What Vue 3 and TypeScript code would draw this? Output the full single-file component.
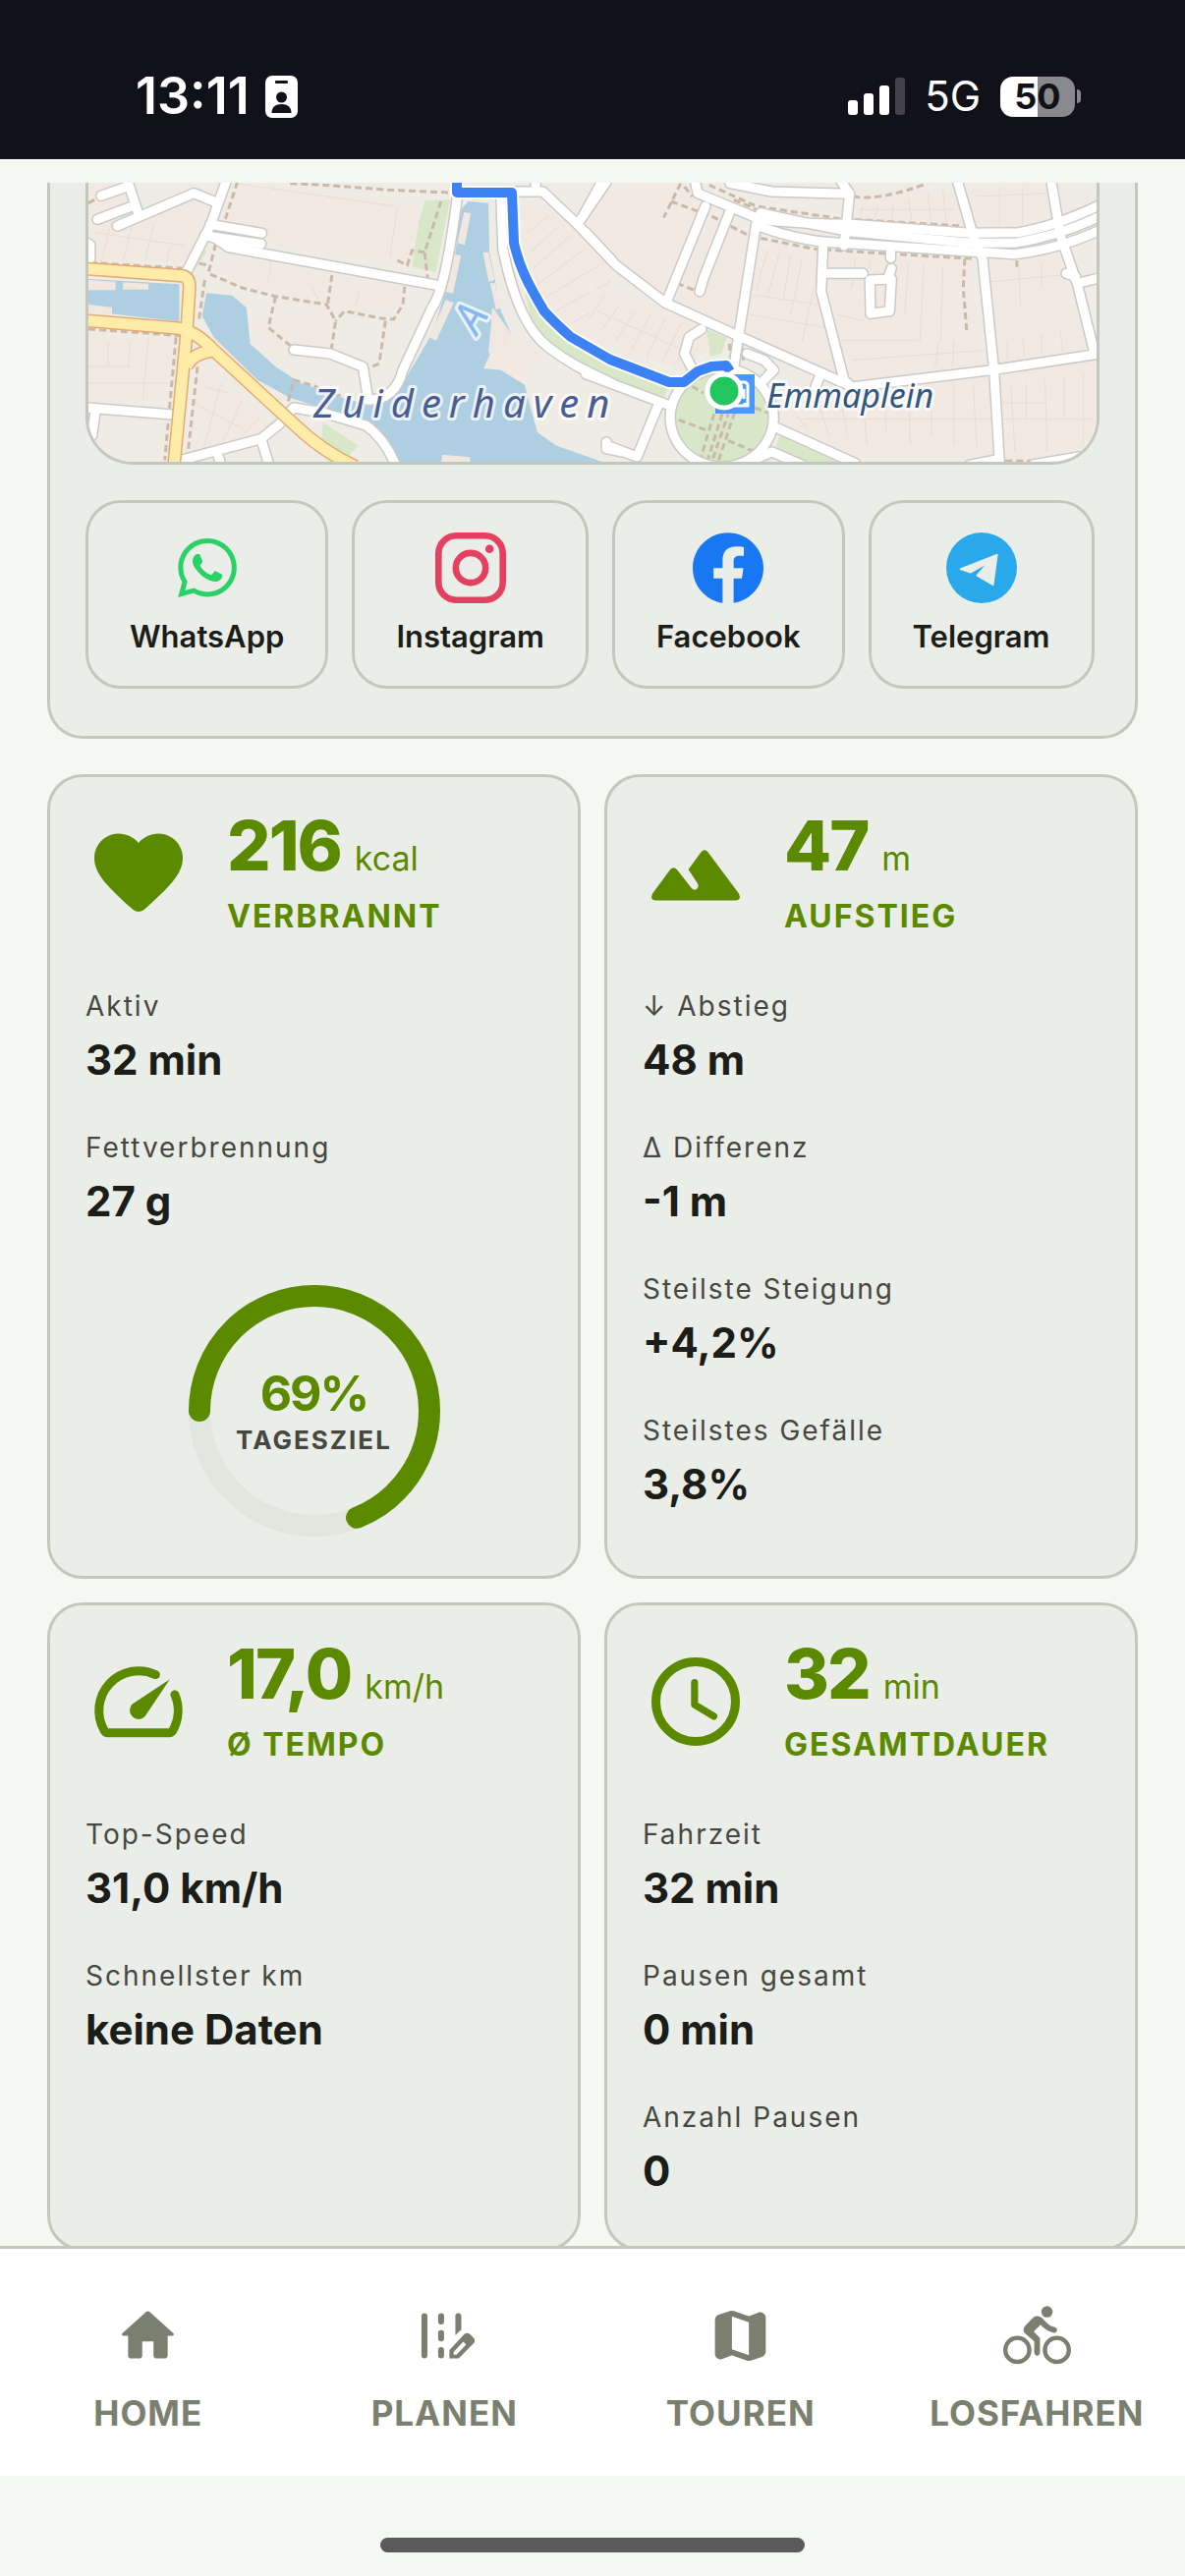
<script setup lang="ts">
interface Stat {
  label: string
  value: string
}

interface StatCard {
  id: 'heart' | 'mountain' | 'speed' | 'clock'
  value: string
  unit: string
  title: string
  stats: Stat[]
  goal?: number
}

interface Tile {
  id: string
  transform: string
  water: string[]
  parks: string[]
  blocks: string[]
  boats: string[]
  roads: string[]
  main: string[]
  paths: string[]
  lots: string[]
}

const shares = [
  { id: 'whatsapp', name: 'WhatsApp' },
  { id: 'instagram', name: 'Instagram' },
  { id: 'facebook', name: 'Facebook' },
  { id: 'telegram', name: 'Telegram' },
]

const cards: StatCard[] = [
  {
    id: 'heart',
    value: '216',
    unit: 'kcal',
    title: 'VERBRANNT',
    stats: [
      { label: 'Aktiv', value: '32 min' },
      { label: 'Fettverbrennung', value: '27 g' },
    ],
    goal: 69,
  },
  {
    id: 'mountain',
    value: '47',
    unit: 'm',
    title: 'AUFSTIEG',
    stats: [
      { label: '↓ Abstieg', value: '48 m' },
      { label: 'Δ Differenz', value: '-1 m' },
      { label: 'Steilste Steigung', value: '+4,2%' },
      { label: 'Steilstes Gefälle', value: '3,8%' },
    ],
  },
  {
    id: 'speed',
    value: '17,0',
    unit: 'km/h',
    title: 'Ø TEMPO',
    stats: [
      { label: 'Top-Speed', value: '31,0 km/h' },
      { label: 'Schnellster km', value: 'keine Daten' },
    ],
  },
  {
    id: 'clock',
    value: '32',
    unit: 'min',
    title: 'GESAMTDAUER',
    stats: [
      { label: 'Fahrzeit', value: '32 min' },
      { label: 'Pausen gesamt', value: '0 min' },
      { label: 'Anzahl Pausen', value: '0' },
    ],
  },
]

const nav = [
  { id: 'home', label: 'HOME' },
  { id: 'plan', label: 'PLANEN' },
  { id: 'tours', label: 'TOUREN' },
  { id: 'ride', label: 'LOSFAHREN' },
]

// Each map tile keeps its own coordinate grid and is placed by its matrix.
const tiles: Tile[] = [
  {
    id: 'west',
    transform: 'matrix(0.37 0 0 0.3333 -50 -26)',
    blocks: [
      'M140 70H240L275 170L400 120L470 140L440 230L400 320L140 315Z',
      'M550 80L700 90L1045 150L1020 335L640 270L500 195Z',
      'M530 305L1000 395L990 460L810 480L650 410L530 380Z',
      'M135 550H370L350 745L135 740Z',
      'M440 640L640 820L600 850L400 910Z',
      'M580 500L790 470L800 580L700 575L640 610Z',
      'M1330 130L1480 215L1570 330V600L1480 540L1390 450L1330 300Z',
      'M1300 540L1380 600L1320 690L1222 640V600L1270 605Z',
    ],
    water: [
      'M130 372L385 388L385 502L130 470Z',
      'M460 415L530 422L570 460L580 570L650 640L720 690L850 740L930 760L900 812L850 790L690 735L600 680L480 550L448 485Z',
      'M1180 135L1235 140L1238 290L1270 470L1298 540L1245 460L1240 600L1222 645L1270 650L1335 695L1350 760L1370 840L1420 880L1560 935H985L960 860L900 820L920 750L1000 690L1080 540L1140 330L1160 160Z',
    ],
    boats: [
      'M1168 168L1187 172L1170 268L1150 262Z',
      'M1140 296L1160 300L1138 416L1116 410Z',
      'M1118 436L1140 444L1092 560L1072 550Z',
      'M1220 290L1236 290L1252 375L1236 380Z',
      'M1240 385L1254 385L1270 460L1256 466Z',
      'M135 375L210 380V406H135Z',
      'M230 382L300 386V404H230Z',
      'M135 450L200 458V480H135Z',
      'M1108 908L1185 916V932H1106Z',
      'M1248 460L1298 540L1270 606L1235 598Z',
    ],
    parks: [
      'M1062 133L1130 130L1090 350L1025 335L1045 190Z',
      'M1335 410L1390 490L1470 560L1570 615V665L1480 625L1390 560L1350 480Z',
      'M780 810L876 880L850 915L775 870Z',
      'M445 265L460 290L430 345Z',
    ],
    lots: [
      'M150 230L400 270M170 320L200 190M230 320L260 190M290 320L315 200M350 320L360 270M1060 150V330M985 155L965 300',
      'M190 560V640M250 560L245 640M300 550L285 740M135 640H250M135 690H360',
      'M450 900L500 690M500 880L560 740M550 860L610 790M440 760L560 830M450 700L520 720M540 80L980 150M750 400L770 440M880 410L870 450M640 300L630 380',
      'M1400 180L1345 230M1430 210L1350 290M1460 240L1360 340M1500 280L1370 390M1540 330L1390 430M1570 380L1420 470M1570 440L1460 510',
    ],
    roads: [
      'M515 70L470 210L405 350',
      'M170 118L235 92M245 80L270 165M160 190L250 152M215 210L425 110L480 135',
      'M470 205L612 232M460 240L610 265M455 238Q480 240 520 275L1090 390',
      'M1150 120C1125 330 1105 420 1080 460L1000 650Q980 740 905 742L890 640L800 600L700 588',
      'M1270 130L1275 280C1300 420 1340 530 1400 580C1470 640 1520 660 1575 690',
      'M1310 105H1385L1480 205L1575 315M1480 205L1560 75M1365 70V105',
      'M130 262L140 268V310',
      'M130 765L375 787M155 770L145 850',
      'M390 925L610 860L660 815L700 765L780 780L900 820Q950 860 980 940M610 860L632 940M490 905L500 940',
      'M1560 870V890L1600 900',
    ],
    main: [
      'M120 340L395 362Q415 370 413 400L405 540L370 945',
      'M120 498L380 522Q430 530 480 590L700 815Q780 900 870 945',
      'M405 640Q420 600 475 592',
    ],
    paths: [
      'M690 80L800 86L960 100L1130 108M545 75L510 195',
      'M485 265L465 355L560 400L650 425L790 450L815 500L803 590M440 325L465 330',
      'M650 425L630 520L690 575M805 360L793 450',
      'M1005 395L1000 450L975 495L940 492L840 470L815 500M952 500L935 630L905 645',
      'M1105 135L1060 290L1068 370M985 315L1012 330L1025 285L1060 290',
      'M140 322L400 340M135 525L390 545M376 550L345 925M435 640L408 910M455 375L438 505',
      'M685 745L700 680L760 700L830 730M135 140L160 125',
    ],
  },
  {
    id: 'east',
    transform: 'matrix(0.3865 0 0 0.3333 510 -26)',
    blocks: [
      'M0 120L120 80H240L290 130L200 430L80 320L0 220Z',
      'M320 190L420 240L380 530L215 435Z',
      'M700 130L960 110L990 215L700 190Z',
      'M450 255L600 290L600 410L660 660L400 530Z',
      'M630 300L780 300L1000 320L1040 640L700 690L620 410Z',
      'M990 90L1200 80L1230 200L1130 225L1015 220Z',
      'M1045 320L1230 290L1310 590L1070 640Z',
      'M500 780L690 710L1050 660L1070 920H700L500 820Z',
      'M1080 660L1340 615V930H1090Z',
      'M0 400L200 460L340 540L250 650L100 600L0 540Z',
    ],
    water: ['M-5 915L50 940H-5Z'],
    boats: [],
    parks: [
      'M-5 610L205 705L195 745L-5 655Z',
      'M500 850L650 930H570L490 890Z',
      'M308 525L360 550L348 600L318 608Z',
      'M348 640A136 155 0 1 0 349 640Z',
    ],
    lots: [
      'M470 280L440 400M500 290L470 420M530 300L510 440M560 310L530 480M590 400L560 560M430 420L600 450M420 480L620 520',
      'M700 310L690 400M740 310L735 340M840 320L830 480M880 330L870 560M930 340L925 560M650 480L720 500M660 560L860 560M690 620L1040 590M920 560L910 640M960 560L955 640',
      'M720 150L710 190M760 150L750 190M800 140L795 190M840 130L850 200M890 110L900 200M930 100L940 205M710 160H960',
      'M1100 560V620M1140 550L1145 610M1190 540V605M1240 530L1245 595M1060 380L1240 360M1130 320L1135 460M1190 320V400',
      'M1110 700L1120 900M1150 690V800M1200 680L1205 900M1250 670V790M1300 660L1300 880M1090 800H1330M1090 750H1200',
      'M530 760L570 830M600 740L630 850M660 730L680 860M720 720L730 880M780 710V840M840 700L845 880M900 700V850M960 690V880M1010 690L1020 890M550 800H1060',
      'M40 420L0 490M80 450L30 530M120 470L70 560M160 480L110 590M200 490L150 610M240 510L190 630M280 540L220 640M20 470L250 590M1020 120L1200 110M1080 90V210M1140 90V205',
    ],
    roads: [
      'M-10 230L70 330L200 445L390 545L690 700',
      'M35 70L-15 175',
      'M275 60L285 110L450 190Q560 205 690 205L1000 232L1130 230Q1230 210 1345 145',
      'M450 170Q560 200 690 228L1000 262L1120 262Q1240 240 1345 180',
      'M450 212Q550 255 640 260L1000 288L1120 296Q1240 280 1345 222',
      'M305 150L205 435M370 165L300 370L290 410M440 195L380 640',
      'M370 80L480 105L680 112M660 70L685 112L670 270',
      'M615 270L610 410L670 680L690 702L1060 650L1345 600',
      'M615 355H720M738 375L795 372L790 470L740 478L738 375M785 372L795 340M793 285V308',
      'M968 70L1010 240L1035 310L1065 650L1080 940',
      'M1215 70L1240 240L1285 390L1330 600M1285 385L1345 368M1255 355L1280 365',
      'M295 525L262 550L250 600L270 645M415 600L460 620L485 650L460 680M610 660L595 700',
      'M-10 662L210 758M180 760L125 915L45 880',
      'M348 645A136 150 0 1 0 349 645M490 825L700 935M430 925L480 900L560 940M1000 940L1065 925M1170 938L1290 915',
    ],
    main: [],
    paths: [
      'M240 80L195 185M215 135L330 185L420 240L590 280L790 295L1010 310',
      'M315 85L440 150L660 188L980 210M250 90L270 120M380 130L440 160',
      'M695 120Q760 135 890 80M230 385L285 410M988 310L984 400L993 530',
      'M290 930L330 775M310 930L350 780M340 925L382 780M325 920L365 785',
      'M235 802L310 835M365 865L435 900M270 700L300 720M435 765L480 785',
      'M368 570L372 620M400 570L405 620M1095 928H1170M1125 315V335M1250 220L1340 165',
    ],
  },
]
</script>

<template>
  <div class="app">
    <header class="status">
      <div class="status-left">
        <span class="time">13:11</span>
        <svg class="badge" viewBox="0 0 33 43" aria-hidden="true">
          <rect width="33" height="43" rx="7" fill="#fff" />
          <rect x="10" y="5" width="13" height="3" rx="1" fill="#11111a" />
          <circle cx="16.500" cy="22" r="5.500" fill="#11111a" />
          <path d="M6.500 38c0-6 4-9 10-9s10 3 10 9z" fill="#11111a" />
        </svg>
      </div>
      <div class="status-right">
        <svg class="signal" viewBox="0 0 58 38" aria-hidden="true">
          <rect x="0" y="23" width="10" height="15" rx="3" fill="#fff" />
          <rect x="16" y="16" width="10" height="22" rx="3" fill="#fff" />
          <rect x="32" y="8" width="10" height="30" rx="3" fill="#fff" />
          <rect x="48" y="0" width="10" height="38" rx="3" fill="#424248" />
        </svg>
        <span class="network">5G</span>
        <div class="battery">
          <span class="battery-body">50</span>
          <span class="battery-nub"></span>
        </div>
      </div>
    </header>

    <main class="content">
      <section class="share-card">
        <div class="map">
          <svg viewBox="0 0 1026 284" preserveAspectRatio="xMidYMax slice" role="img" aria-label="Karte der Tour">
            <rect width="1026" height="284" fill="#efebe5" />
            <g v-for="t in tiles" :key="t.id + '-land'" :transform="t.transform">
              <path v-for="d in t.blocks" :key="d" :d="d" fill="#f2e9e2" />
              <path v-for="d in t.lots" :key="d" :d="d" class="lot" />
              <path v-for="d in t.water" :key="d" :d="d" fill="#aecee1" />
              <path v-for="d in t.boats" :key="d" :d="d" fill="#f0e7e0" />
              <path v-for="d in t.parks" :key="d" :d="d" fill="#d8e7c8" />
            </g>
            <g v-for="t in tiles" :key="t.id + '-case'" :transform="t.transform">
              <path v-for="d in t.paths" :key="d" :d="d" class="footway" />
              <path v-for="d in t.roads" :key="d" :d="d" class="road-case" />
            </g>
            <g v-for="t in tiles" :key="t.id + '-road'" :transform="t.transform">
              <path v-for="d in t.roads" :key="d" :d="d" class="road" />
              <path v-for="d in t.main" :key="d + 'c'" :d="d" class="main-case" />
              <path v-for="d in t.main" :key="d" :d="d" class="main-road" />
            </g>
            <text class="river" text-anchor="middle" transform="translate(402 145) rotate(-60)">A</text>
            <text class="harbour" x="229" y="239">Zuiderhaven</text>
            <rect x="638" y="195" width="40" height="40" fill="#4c97fb" />
            <path d="M655 203h12q4 0 4 4v20h-16M667 210v10M668 224v4" fill="none" stroke="#fff" stroke-width="3" />
            <path class="route-halo" d="M375-4V10H431L433 61C438 84 446 101 464 131Q478 146 491 157L531 180L591 203H606L620 192L634 187L649 186L653 192" />
            <path class="route" d="M375-4V10H431L433 61C438 84 446 101 464 131Q478 146 491 157L531 180L591 203H606L620 192L634 187L649 186L653 192" />
            <circle cx="647" cy="212" r="17" fill="#22c55e" stroke="#fff" stroke-width="5" />
            <text class="place" x="690" y="229">Emmaplein</text>
          </svg>
        </div>

        <div class="shares">
          <button v-for="s in shares" :key="s.id" type="button" class="share">
            <svg viewBox="0 0 24 24" aria-hidden="true">
              <template v-if="s.id === 'whatsapp'">
                <path fill="#29d167" d="M12.04 2C6.58 2 2.13 6.450 2.130 11.910C2.130 13.660 2.590 15.360 3.450 16.860L2.050 22L7.300 20.620C8.750 21.410 10.380 21.830 12.040 21.830C17.500 21.830 21.950 17.380 21.950 11.920C21.950 9.270 20.920 6.780 19.050 4.910C17.180 3.030 14.690 2 12.040 2M12.050 3.670C14.250 3.670 16.310 4.530 17.870 6.090C19.420 7.650 20.280 9.720 20.280 11.920C20.280 16.460 16.580 20.150 12.040 20.150C10.560 20.150 9.110 19.760 7.850 19L7.550 18.830L4.430 19.650L5.260 16.610L5.060 16.290C4.240 15 3.800 13.470 3.800 11.910C3.810 7.370 7.500 3.670 12.050 3.670" />
                <path fill="#29d167" d="M8.530 7.330C8.370 7.330 8.100 7.390 7.870 7.640C7.650 7.890 7 8.500 7 9.710C7 10.930 7.890 12.100 8 12.270C8.140 12.440 9.760 14.940 12.250 16C12.840 16.270 13.300 16.420 13.660 16.530C14.250 16.720 14.790 16.690 15.220 16.630C15.700 16.560 16.680 16.030 16.890 15.450C17.100 14.870 17.100 14.380 17.040 14.270C16.970 14.170 16.810 14.110 16.560 14C16.310 13.860 15.090 13.260 14.870 13.180C14.640 13.100 14.500 13.060 14.310 13.300C14.150 13.550 13.670 14.110 13.530 14.270C13.380 14.440 13.240 14.460 13 14.340C12.740 14.210 11.940 13.950 11 13.110C10.260 12.450 9.770 11.640 9.620 11.390C9.500 11.150 9.610 11 9.730 10.890C9.840 10.780 10 10.600 10.100 10.450C10.230 10.310 10.270 10.200 10.350 10.040C10.430 9.870 10.390 9.730 10.330 9.610C10.270 9.500 9.770 8.260 9.560 7.770C9.360 7.290 9.160 7.350 9 7.340Z" />
              </template>
              <g v-else-if="s.id === 'instagram'" fill="none" stroke="#e4405f" stroke-width="2.2">
                <rect x="1.100" y="1.100" width="21.800" height="21.800" rx="6" />
                <circle cx="12" cy="12" r="5.050" />
                <circle cx="18.400" cy="5.600" r="1.440" fill="#e4405f" stroke="none" />
              </g>
              <path v-else-if="s.id === 'facebook'" fill="#1877f2" d="M24 12.073c0-6.627-5.373-12-12-12s-12 5.373-12 12c0 5.990 4.388 10.954 10.125 11.854v-8.385H7.078v-3.470h3.047V9.430c0-3.007 1.792-4.669 4.533-4.669 1.312 0 2.686.235 2.686.235v2.953H15.830c-1.491 0-1.956.925-1.956 1.874v2.250h3.328l-.532 3.470h-2.796v8.385C19.612 23.027 24 18.062 24 12.073z" />
              <template v-else>
                <circle cx="12" cy="12" r="12" fill="#29a9eb" />
                <path d="M4.800 12.400L17.300 7.500L15.900 17.800L10.400 14.600L14.300 10.200L8.200 13.600Z" fill="#ebeee8" stroke="#ebeee8" stroke-width=".5" stroke-linejoin="round" />
              </template>
            </svg>
            <span>{{ s.name }}</span>
          </button>
        </div>
      </section>

      <section class="grid">
        <article v-for="c in cards" :key="c.id" class="card">
          <div class="head">
            <svg class="head-icon" viewBox="0 0 24 24" fill="currentColor" aria-hidden="true">
              <path v-if="c.id === 'heart'" d="M13.350 20.130c-.76.69-1.930.69-2.690-.01l-.11-.1C5.300 15.270 1.870 12.160 2 8.280c.06-1.700.93-3.330 2.340-4.290 2.640-1.800 5.900-.96 7.660 1.100 1.760-2.060 5.020-2.910 7.660-1.100 1.410.96 2.280 2.590 2.340 4.290.14 3.880-3.300 6.990-8.550 11.760l-.1.09z" />
              <path v-else-if="c.id === 'mountain'" d="M13.200 7.200Q14 6.200 14.800 7.200L21.800 16.600Q22.400 18.100 21 18.100H3Q1.600 18.100 2.200 16.600L6.200 11.150Q7 10.250 7.800 11.150L11.100 15.400Q11.750 16 12.300 15.450Q12.800 14.900 12.400 14.200L10.350 11.100Z" />
              <template v-else-if="c.id === 'speed'">
                <path d="M15.850 5.900A9 9 0 0 0 4.250 18.550Q4.550 19.050 5.050 19.050H18.950Q19.450 19.050 19.750 18.550A9.300 9.300 0 0 0 20.200 10.400" fill="none" stroke="currentColor" stroke-width="2" stroke-linecap="round" />
                <path d="M10.590 15.410a2 2 0 0 0 2.830 0l5.660-8.490-8.490 5.660a2 2 0 0 0 0 2.830z" />
              </template>
              <g v-else fill="none" stroke="currentColor" stroke-linecap="round" stroke-linejoin="round">
                <circle cx="12" cy="12" r="9" stroke-width="2" />
                <path d="M11.750 7.700V12.700L16.100 15.300" stroke-width="1.6" />
              </g>
            </svg>
            <div class="head-text">
              <p class="figure">{{ c.value }}<span class="unit">{{ c.unit }}</span></p>
              <h2>{{ c.title }}</h2>
            </div>
          </div>
          <dl class="stats">
            <div v-for="s in c.stats" :key="s.label" class="stat">
              <dt>{{ s.label }}</dt>
              <dd>{{ s.value }}</dd>
            </div>
          </dl>
          <div v-if="c.goal" class="ring">
            <svg viewBox="0 0 264 264" aria-hidden="true">
              <circle cx="132" cy="132" r="117" class="ring-track" />
              <circle
                cx="132"
                cy="132"
                r="117"
                class="ring-bar"
                pathLength="100"
                :stroke-dasharray="`${c.goal} 100`"
                transform="rotate(180 132 132)"
              />
            </svg>
            <div class="ring-text">
              <strong>{{ c.goal }}%</strong>
              <span>TAGESZIEL</span>
            </div>
          </div>
        </article>
      </section>
    </main>

    <nav class="tabs" aria-label="Hauptnavigation">
      <a v-for="n in nav" :key="n.id" :href="'#' + n.id">
        <svg viewBox="0 0 24 24" fill="currentColor" aria-hidden="true">
          <path v-if="n.id === 'home'" d="M10 19v-5h4v5c0 .55.45 1 1 1h3c.55 0 1-.45 1-1v-7h1.700c.46 0 .68-.57.33-.87L12.670 3.600c-.38-.34-.96-.34-1.340 0l-8.360 7.530c-.34.3-.13.87.33.87H5v7c0 .55.45 1 1 1h3c.55 0 1-.45 1-1z" />
          <template v-else-if="n.id === 'plan'">
            <rect x="3.800" y="4" width="2.100" height="16" rx="1.050" />
            <rect x="9.700" y="4" width="2.100" height="4" rx="1.050" />
            <rect x="9.700" y="10" width="2.100" height="4" rx="1.050" />
            <rect x="9.700" y="16" width="2.100" height="4" rx="1.050" />
            <path d="M15.800 5.050a1.050 1.050 0 0 1 2.100 0V9.800L15.800 11.700Z" />
            <path fill-rule="evenodd" d="M13.700 20V17L19 11.400Q19.900 10.600 20.900 11.400L22.300 12.800Q23 13.700 22.300 14.600L17 20ZM15.200 18.700H16.200L19.600 15.100L18.600 14.100L15.200 17.700Z" />
          </template>
          <path v-else-if="n.id === 'tours'" d="M14.650 4.980l-5-1.750c-.42-.14-.87-.15-1.300-.01L4.360 4.560C3.550 4.840 3 5.600 3 6.460v11.850c0 1.410 1.410 2.370 2.720 1.860l2.930-1.140c.22-.09.47-.09.69-.01l5 1.750c.42.14.87.15 1.300.01l3.990-1.340c.81-.27 1.360-1.040 1.360-1.900V5.690c0-1.410-1.410-2.370-2.720-1.860l-2.930 1.140c-.22.08-.46.09-.69.01zM15 18.890l-6-2.110V5.110l6 2.110v11.670z" />
          <template v-else>
            <circle cx="15.500" cy="3.500" r="2" />
            <g fill="none" stroke="currentColor" stroke-width="1.5">
              <circle cx="5" cy="17" r="4.250" />
              <circle cx="19" cy="17" r="4.250" />
            </g>
            <path d="M10.800 10.500l2.400-2.400.8.8c1.060 1.060 2.380 1.790 3.930 2.020.6.09 1.140-.39 1.140-1 0-.49-.37-.9-.85-.98-1.080-.2-1.980-.72-2.720-1.440l-1.900-1.900c-.5-.4-1-.6-1.600-.6s-1.100.2-1.400.6L7.800 8.400c-.4.4-.6.9-.6 1.400 0 .6.2 1.100.6 1.400L11 14v4c0 .55.45 1 1 1s1-.45 1-1v-5.200l-2.200-2.300z" />
          </template>
        </svg>
        <span>{{ n.label }}</span>
      </a>
    </nav>
    <footer class="home-indicator"><span></span></footer>
  </div>
</template>

<style>
body {
  background: #f5f7f2;
}
</style>

<style scoped>
.app {
  display: flex;
  flex-direction: column;
  height: 100vh;
  background: #f5f7f2;
  color: #1b1d18;
  font-family: Inter, "Open Sans", sans-serif;
}

.app * {
  box-sizing: border-box;
}

p,
h2,
dl,
dd {
  margin: 0;
}

.status {
  display: flex;
  flex: none;
  align-items: center;
  justify-content: space-between;
  height: 162px;
  padding: 34px 106px 0 138px;
  background: #11111a;
  color: #fff;
}

.status-left,
.status-right,
.battery {
  display: flex;
  align-items: center;
}

.status-left {
  gap: 16px;
}

.status-right {
  gap: 20px;
}

.time {
  font-size: 52px;
  font-weight: 600;
  line-height: 60px;
}

.badge {
  width: 33px;
  height: 43px;
}

.signal {
  width: 58px;
  height: 38px;
}

.network {
  font-size: 42px;
  line-height: 50px;
}

.battery {
  gap: 2px;
}

.battery-body {
  width: 76px;
  height: 41px;
  border-radius: 13px;
  background: linear-gradient(90deg, #fff 50%, #88888d 50%);
  color: #11111a;
  font-size: 36px;
  font-weight: 700;
  line-height: 41px;
  text-align: center;
}

.battery-nub {
  width: 4px;
  height: 14px;
  border-radius: 0 4px 4px 0;
  background: #88888d;
}

.content {
  flex: 1;
  min-height: 0;
  margin-top: 24px;
  padding: 0 48px;
  overflow-y: auto;
  scrollbar-width: none;
}

.share-card {
  padding: 0 36px 48px;
  border: solid #c4c8bb;
  border-width: 0 3px 3px;
  border-radius: 0 0 36px 36px;
  background: #ebeee8;
}

.map {
  overflow: hidden;
  border: solid #c4c8bb;
  border-width: 0 3px 3px;
  border-radius: 0 0 48px 48px;
}

.map svg {
  display: block;
  width: 100%;
  height: 284px;
}

.map path {
  vector-effect: non-scaling-stroke;
}

.lot,
.footway,
.road-case,
.road,
.main-case,
.main-road,
.route,
.route-halo {
  fill: none;
  stroke-linejoin: round;
}

.lot {
  stroke: #e9ddd4;
  stroke-width: 1px;
}

.footway {
  stroke: #cbb9a8;
  stroke-width: 3px;
  stroke-dasharray: 7 4;
}

.road-case {
  stroke: #cbcac7;
  stroke-width: 12px;
  stroke-linecap: round;
}

.road {
  stroke: #fff;
  stroke-width: 9px;
  stroke-linecap: round;
}

.main-case {
  stroke: #e5a973;
  stroke-width: 14px;
}

.main-road {
  stroke: #ffeca8;
  stroke-width: 11px;
}

.route-halo {
  stroke: #fff;
  stroke-width: 14px;
}

.route {
  stroke: #3c82f4;
  stroke-width: 10px;
}

.river,
.harbour,
.place {
  font-family: "Noto Sans", "Open Sans", sans-serif;
  font-style: italic;
  paint-order: stroke;
  stroke: rgba(255, 255, 255, 0.75);
  stroke-width: 6px;
  stroke-linejoin: round;
}

.river {
  fill: #86b7f3;
  font-size: 44px;
}

.harbour {
  fill: #4a5d92;
  font-size: 40px;
  letter-spacing: 8px;
}

.place {
  fill: #30587f;
  font-size: 34px;
}

.shares {
  display: flex;
  gap: 24px;
  margin-top: 36px;
  overflow: hidden;
}

.share {
  display: flex;
  flex: none;
  flex-direction: column;
  gap: 10px;
  align-items: center;
  padding: 30px 42px 26px;
  border: 3px solid #c4c8bb;
  border-radius: 36px;
  background: none;
  color: #1b1d18;
  font-family: inherit;
  font-size: 31px;
  font-weight: 600;
  line-height: 48px;
}

.share svg {
  width: 72px;
  height: 72px;
}

.grid {
  display: grid;
  grid-template-columns: 1fr 1fr;
  gap: 24px;
  margin-top: 36px;
}

.card {
  padding: 36px;
  border: 3px solid #c4c8bb;
  border-radius: 36px;
  background: #ebeee8;
}

.head {
  display: flex;
  gap: 36px;
  align-items: center;
  margin-bottom: 53px;
  color: #5b8a00;
}

.head-icon {
  flex: none;
  width: 108px;
  height: 108px;
}

.head-text {
  display: flex;
  flex-direction: column;
  gap: 20px;
}

.figure {
  font-size: 70px;
  font-weight: 800;
  line-height: 68px;
  letter-spacing: -2px;
}

.unit {
  margin-left: 14px;
  font-size: 34px;
  font-weight: 400;
  line-height: 34px;
  letter-spacing: 0;
}

h2 {
  font-size: 32px;
  font-weight: 700;
  line-height: 36px;
  letter-spacing: 2px;
}

.stats {
  display: flex;
  flex-direction: column;
  gap: 42px;
  padding-bottom: 15px;
}

.stat {
  display: flex;
  flex-direction: column;
  gap: 8px;
}

dt {
  color: #454840;
  font-size: 28px;
  line-height: 40px;
  letter-spacing: 2px;
}

dd {
  font-size: 42px;
  font-weight: 700;
  line-height: 54px;
}

.ring {
  display: grid;
  place-items: center;
  margin-top: 39px;
}

.ring > * {
  grid-area: 1 / 1;
}

.ring svg {
  display: block;
  width: 264px;
  height: 264px;
}

.ring circle {
  fill: none;
  stroke-width: 22px;
}

.ring-track {
  stroke: #e3e6df;
}

.ring-bar {
  stroke: #5b8a00;
  stroke-linecap: round;
}

.ring-text {
  display: flex;
  flex-direction: column;
  gap: 6px;
  align-items: center;
}

.ring-text strong {
  color: #5b8a00;
  font-size: 50px;
  font-weight: 700;
  line-height: 54px;
  letter-spacing: -2px;
}

.ring-text span {
  color: #454840;
  font-size: 26px;
  font-weight: 700;
  line-height: 30px;
  letter-spacing: 2px;
}

.tabs {
  display: flex;
  flex: none;
  padding: 54px 0 40px;
  border-top: 3px solid #c4c8bb;
  background: #fff;
}

.tabs a {
  display: flex;
  flex: 1 0 0;
  flex-direction: column;
  gap: 20px;
  align-items: center;
  min-width: 0;
  color: #7a7f6f;
  font-size: 35px;
  font-weight: 700;
  line-height: 48px;
  letter-spacing: 1px;
  text-decoration: none;
}

.tabs svg {
  width: 69px;
  height: 69px;
}

.home-indicator {
  display: flex;
  flex: none;
  justify-content: center;
  padding: 63px 0 24px;
}

.home-indicator span {
  width: 432px;
  height: 15px;
  border-radius: 8px;
  background: #5a5a5a;
}
</style>
